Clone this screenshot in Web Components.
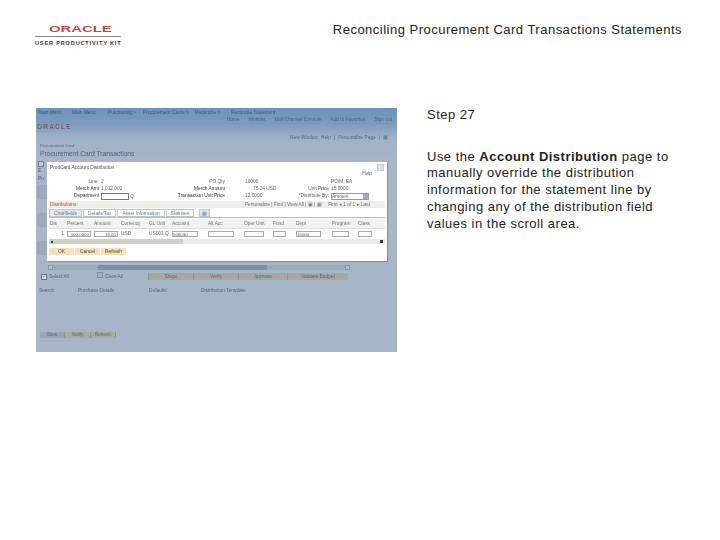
<!DOCTYPE html>
<html lang="en"><head><meta charset="utf-8"><title>Step 27</title>
<style>
html,body{margin:0;background:#fff;color:#222;font-family:"Liberation Sans",Arial,sans-serif}
</style></head><body>
<step-page>
  <page-header slot="header" title-text="Reconciling Procurement Card Transactions Statements"></page-header>
  <app-thumb slot="shot"></app-thumb>
  <step-text slot="text" step="Step 27">Use the <b>Account Distribution</b> page to manually override the distribution information for the statement line by changing any of the distribution field values in the scroll area.</step-text>
</step-page>
<script>
function def(name, html){
  customElements.define(name, class extends HTMLElement{
    connectedCallback(){
      if(this.shadowRoot) return;
      const r=this.attachShadow({mode:'open'});
      r.innerHTML = typeof html==='function' ? html(this) : html;
    }
  });
}
def('step-page',`<style>
:host{display:block;width:720px;height:540px;overflow:hidden}
.body{display:flex;padding:0 0 0 36px;gap:30px;align-items:flex-start;margin-top:54px}
</style><slot name="header"></slot><div class="body"><slot name="shot"></slot><slot name="text"></slot></div>`);

def('oracle-logo',`<style>
:host{display:block;width:86px}
.o{display:block;height:10px;margin:1px 0 0 14px;width:40px;color:#c4453c;font:bold 9.6px/10px "Liberation Sans",sans-serif;transform:scaleX(1.55);transform-origin:0 50%;white-space:nowrap}
.l{height:1px;background:#8a8a8a;margin-top:2px}
.u{font:bold 5.6px/7px "Liberation Sans",sans-serif;color:#333;letter-spacing:.82px;white-space:nowrap;margin-top:3px}
</style><span class="o">ORACLE</span><div class="l"></div><div class="u">USER PRODUCTIVITY KIT</div>`);

def('page-header',h=>`<style>
:host{display:flex;justify-content:space-between;align-items:flex-start;padding:23px 38px 0 35px;height:31px}
.t{font-size:13px;line-height:14px;color:#222;white-space:nowrap;letter-spacing:.49px}
</style><oracle-logo></oracle-logo><div class="t">${h.getAttribute('title-text')}</div>`);

def('step-text',h=>`<style>
:host{display:block;width:252px;font-size:13px;letter-spacing:.49px;line-height:16.7px;color:#222;margin-top:-1px}
.s{margin-bottom:25px}
b{font-weight:bold}
</style><div class="s">${h.getAttribute('step')}</div><div><slot></slot></div>`);

def('app-thumb',`<style>
:host{display:block;position:relative;width:361px;height:244px;flex:none;overflow:hidden;
 background:linear-gradient(#6e93ba 0,#7c9cbf 16px,#9fb2c8 30px,#a6b5c8 50px,#a6b5c8 100%);
 font:4.8px/6px "Liberation Sans",sans-serif;color:#55687f;filter:blur(.65px)}
.nav{display:flex;padding:2px 0 0 2px;white-space:nowrap;height:6px;color:#3d5a78}
.nav span:nth-child(1){width:34px}.nav span:nth-child(2){width:36px}.nav span:nth-child(3){width:35px}.nav span:nth-child(4){width:52px}.nav span:nth-child(5){width:36px}
.nav2{display:flex;justify-content:flex-end;gap:9px;padding:1px 5px 0 0;height:6px;color:#466484}
.logo{font:bold 6.4px/7px "Liberation Sans",sans-serif;color:#7d5a70;padding-left:1px;letter-spacing:1.3px;height:7px}
.links{display:flex;justify-content:flex-end;gap:3px;margin-top:5px;padding-right:9px;height:6px}
.crumb{padding-left:4px;margin-top:2px;height:6px;font-size:4.2px}
.title{padding-left:4px;font-size:6.7px;line-height:10px;color:#4d6078;height:10px}
.behind{height:104px;position:relative;padding:2px 0 0 2px;box-sizing:border-box;line-height:7.5px}
.behind i{display:block;width:4px;height:4px;background:#c2ccd8;border:.5px solid #6d7e92}
.band{position:absolute;left:1px;top:26px;width:10px;height:76px;background:repeating-linear-gradient(#9baabd 0,#9baabd 14px,#a6b5c8 14px,#a6b5c8 28px)}
.scroll{display:flex;margin:2px 0 0 12px;width:302px;height:5px;background:#9aa9bb}
.scroll i{display:block;width:5px;background:#b4bfcb;border:.5px solid #8a98aa;box-sizing:border-box}
.scroll u{display:block;margin-left:45px;width:169px;background:#7f8ea3}
.scroll s{display:block;margin-left:auto;width:5px;background:#b4bfcb;border:.5px solid #8a98aa;box-sizing:border-box}
.acts{display:flex;margin-top:3px;padding-left:5px;height:7px;align-items:center}
.chk{display:flex;align-items:center;gap:2px;width:56px;position:relative}
.chk i{display:block;width:4px;height:4px;background:#e3e8ee;border:.5px solid #5d6e84;font:bold 4px/4px "DejaVu Sans",sans-serif;color:#223;text-align:center}
.chk.off i{background:#a6b5c8;margin-top:-3px;border-color:#7d8ca0}
.btns{display:flex;margin-left:-5px}
.btns span{width:45px;height:7px;line-height:7px;text-align:center;background:#a5a99f;border-left:1px solid #8f9389;box-sizing:border-box}
.btns span:nth-child(3){width:49px}.btns span:last-child{width:61px}
.menu{display:flex;padding-left:3px;margin-top:8px;height:8px}
.menu span:nth-child(1){width:39px}.menu span:nth-child(2){width:71px}.menu span:nth-child(3){width:52px}
.foot{display:flex;margin:36px 0 0 4px;width:76px;height:6px;line-height:6px;background:#a5ad9e;font-size:4.6px}
.foot span{flex:1;text-align:center;border-right:.5px solid #8d9586}
.foot span:first-child{background:#98a6b4}
</style>
<div class="nav"><span>Main Menu</span><span>Main Menu</span><span>Purchasing &gt;</span><span>Procurement Cards &gt;</span><span>Reconcile &gt;</span><span>Reconcile Statement</span></div>
<div class="nav2"><span>Home</span><span>Worklist</span><span>MultiChannel Console</span><span>Add to Favorites</span><span>Sign out</span></div>
<div class="logo">ORACLE</div>
<div class="links"><span>New Window</span><span>Help</span><span>|</span><span>Personalize Page</span><span>|</span><span>▦</span></div>
<div class="crumb">Procurement Card</div>
<div class="title">Procurement Card Transactions</div>
<div class="behind"><i></i>E<br>Pu<div class="band"></div></div>
<div class="scroll"><i></i><u></u><s></s></div>
<div class="acts"><span class="chk"><i>✓</i>Select All</span><span class="chk off"><i></i>Clear All</span><span class="btns"><span>Stage</span><span>Verify</span><span>Approve</span><span>Validate Budget</span></span></div>
<div class="menu"><span>Search</span><span>Purchase Details</span><span>Defaults</span><span>Distribution Template</span></div>
<div class="foot"><span>Save</span><span>Notify</span><span>Refresh</span></div>
<thumb-modal></thumb-modal>`);

def('thumb-modal',`<style>
:host{position:absolute;left:11px;top:54px;width:340px;height:99px;background:#fff;box-shadow:1px 1px 0 #7f8d9d;color:#5d5d5d;font:4.8px/6px "Liberation Sans",sans-serif;box-sizing:border-box;padding:2px 2px 0 2px;display:block}
.bar{display:flex;justify-content:space-between;padding:0 1px;height:7px;line-height:7px;font-size:4.8px;color:#4c4c4c}
.x{width:5px;height:5px;background:#dfe3e8;border:.5px solid #c5cbd2}
.help{text-align:right;padding-right:13px;height:6px;color:#4a6890}
.f{display:grid;grid-template-columns:52px 60px 84px 50px 36px 40px;height:21px;margin:2px 0 1px;grid-auto-rows:6.8px;white-space:nowrap}
.r{text-align:right;padding-right:2px}
.m{text-align:right;padding-right:20px}
.v{padding-left:8px}
.f .d{color:#333}
.box{display:inline-block;width:26px;height:5px;border:.5px solid #777;vertical-align:middle}
.sel{display:inline-block;width:36px;height:5px;border:.5px solid #999;vertical-align:middle;background:linear-gradient(90deg,#fff 85%,#aab 85%);font-style:normal;line-height:5px}
.sec{display:flex;justify-content:space-between;background:#eeeee8;height:7px;line-height:7px;padding:0 15px 0 1px;color:#6e6e6e;margin-top:1px}
.sec b{font-weight:normal;color:#b24a3a}
.tabs{display:flex;height:8px;line-height:7px;gap:1px;border-bottom:.5px solid #b5bac4;color:#66799a;margin-top:1px}
.tabs span{border:.5px solid #c0c4cc;padding:0 4px;background:#fff}
.tabs span:first-child{background:#e6eaf2}
.tabs span:last-child{background:#dfe5ee;padding:0 2px;margin-left:4px}
.g{display:grid;grid-template-columns:17px 27px 27px 28px 23px 36px 36px 29px 23px 36px 26px 18px;white-space:nowrap}
.h{height:9px;line-height:9px;background:#f2f2ee;margin-top:1px;border-bottom:.5px solid #ddd;color:#6e6e6e;padding-left:1px}
.row{height:7px;align-items:center;padding-left:1px;color:#5d5d5d;margin-top:1px}
.i{display:block;border:.5px solid #aaa;height:6px;line-height:5px;box-sizing:border-box;font-size:4.4px;overflow:hidden;text-align:right;padding-right:1px;width:24px}
.s2{height:5px;margin-top:2px;background:linear-gradient(90deg,#cfcfc6 0,#cfcfc6 40%,#ecece6 40%);position:relative}
.s2:before{content:"";position:absolute;left:2px;top:1.5px;width:2px;height:2px;background:#333}
.s2:after{content:"";position:absolute;right:2px;top:1px;width:3px;height:3px;background:#333}
.ok{display:flex;width:78px;margin-top:4px;height:7px;line-height:7px;background:#f6dfbb;text-align:center;color:#4a4a40}
.ok span{flex:1;border-right:.5px solid #fff}
</style>
<div class="bar"><span>ProdCard Account Distribution</span><span class="x"></span></div>
<div class="help">Help</div>
<div class="f">
 <span class="r">Line:</span><span>2</span><span class="m">PO Qty</span><span>10000</span><span></span><span>PO/M: EA</span>
 <span class="r d">Merch Amt</span><span>1,012,002</span><span class="m d">Merch Amount</span><span class="v">75.24 USD</span><span class="r">Unit Price</span><span>15.0000</span>
 <span class="r d">Department</span><span><i class="box"></i> Q</span><span class="m d">Transaction Unit Price</span><span>12.0000</span><span class="r">*Distribute By:</span><span><i class="sel">Amount</i></span>
</div>
<div class="sec"><b>Distributions</b><span>Personalize | Find | View All | ▣ | ▦ &nbsp; &nbsp; First ◂ 1 of 1 ▸ Last</span></div>
<div class="tabs"><span>Chartfields</span><span>Details/Tax</span><span>Asset Information</span><span>Statuses</span><span>▦</span></div>
<div class="g h"><span>Dis</span><span>Percent</span><span>Amount</span><span>Currency</span><span>GL Unit</span><span>Account</span><span>Alt Acc</span><span>Oper Unit</span><span>Fund</span><span>Dept</span><span>Program</span><span>Class</span></div>
<div class="g row"><span style="text-align:right;padding-right:3px">1</span><span class="i">100.0000</span><span class="i">16.00</span><span>USD</span><span>US001 Q</span><span class="i" style="width:26px;text-align:left">506030</span><span class="i" style="width:26px"></span><span class="i" style="width:20px"></span><span class="i" style="width:13px"></span><span class="i" style="width:25px;text-align:left">10000</span><span class="i" style="width:17px"></span><span class="i" style="width:14px"></span></div>
<div class="s2"></div>
<div class="ok"><span>OK</span><span>Cancel</span><span>Refresh</span></div>`);
</script>
</body></html>
